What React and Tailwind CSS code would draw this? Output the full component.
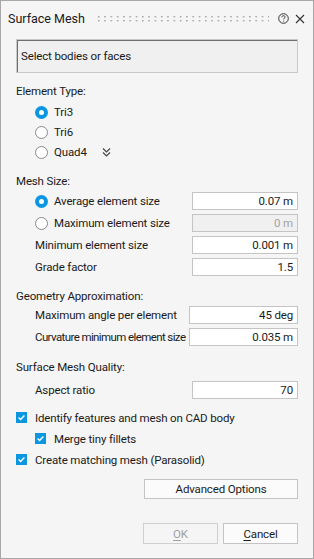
import React from 'react';

const font = { fontFamily: 'Roboto, "Liberation Sans", Arial, sans-serif' };

// small drawn glyphs
const HelpIcon = () => (
  <svg width="11" height="11" viewBox="0 0 11 11" aria-hidden="true">
    <circle cx="5.5" cy="5.5" r="4.8" fill="none" stroke="#333" strokeWidth="1" />
    <path d="M3.9 4.3c0-1 .7-1.6 1.6-1.6s1.6.6 1.6 1.4c0 .9-1.1 1.1-1.5 1.8v.5" fill="none" stroke="#333" strokeWidth="1" />
    <circle cx="5.6" cy="8" r=".6" fill="#333" />
  </svg>
);

const CloseIcon = () => (
  <svg width="10" height="10" viewBox="0 0 10 10" aria-hidden="true">
    <path d="M1 1l8 8M9 1l-8 8" stroke="#333" strokeWidth="1.1" />
  </svg>
);

const Grip = () => (
  <svg width="172" height="8" aria-hidden="true">
    <defs>
      <pattern id="dots" width="6.3" height="4" patternUnits="userSpaceOnUse">
        <rect x="1" y="1" width="1.4" height="1.4" fill="#9a9a9a" />
      </pattern>
    </defs>
    <rect width="172" height="8" fill="url(#dots)" />
  </svg>
);

const DoubleChevron = () => (
  <svg width="9" height="11" viewBox="0 0 9 11" aria-hidden="true">
    <path d="M1 1.5l3.5 3.5 3.5-3.5M1 5.5l3.5 3.5 3.5-3.5" fill="none" stroke="#444" strokeWidth="1.1" />
  </svg>
);

const Radio = ({ checked }) =>
  checked ? (
    <span className="flex h-[13px] w-[13px] shrink-0 items-center justify-center rounded-full bg-[#0a97e0]">
      <span className="h-[5px] w-[5px] rounded-full bg-white" />
    </span>
  ) : (
    <span className="h-[13px] w-[13px] shrink-0 rounded-full border border-[#8a8a8a] bg-white" />
  );

const Checkbox = () => (
  <span className="flex h-[11px] w-[11px] shrink-0 items-center justify-center bg-[#0a97e0]">
    <svg width="9" height="9" viewBox="0 0 9 9" aria-hidden="true">
      <path d="M1.6 4.6l2 2 3.8-4" fill="none" stroke="white" strokeWidth="1.4" />
    </svg>
  </span>
);

const Field = ({ value, disabled, width = 'w-[106px]' }) => (
  <div
    className={`flex h-[18px] ${width} shrink-0 items-center justify-end border border-[#c4c4c4] pr-[4px] ${
      disabled ? 'bg-[#f0f0f0] text-[#a3a3a3]' : 'bg-white text-[#1a1a1a]'
    }`}
  >
    {value}
  </div>
);

const FieldRow = ({ label, value, disabled, radio, width, tight }) => (
  <div className="flex h-[22px] items-center justify-between">
    <div className="flex min-w-0 items-center whitespace-nowrap pl-[19px]">
      {radio !== undefined && (
        <span className="mr-[6px] flex">
          <Radio checked={radio} />
        </span>
      )}
      <span className={tight ? 'tracking-[-0.6px]' : ''}>{label}</span>
    </div>
    <Field value={value} disabled={disabled} width={width} />
  </div>
);

const CheckRow = ({ label, indent = '' }) => (
  <div className={`flex h-[21px] items-center whitespace-nowrap ${indent}`}>
    <Checkbox />
    <span className="ml-[8px]">{label}</span>
  </div>
);

export default function App() {
  return (
    <div
      style={font}
      className="flex h-[559px] w-[314px] flex-col border border-[#a8a8a8] bg-[#f5f5f5] px-[15px] text-[11.5px] leading-[16px] tracking-[-0.15px] text-[#1a1a1a]"
    >
      {/* title bar */}
      <div className="-mx-[8px] flex h-[35px] items-center whitespace-nowrap">
        <span className="w-[89px] shrink-0 text-[12.5px] tracking-normal">Surface Mesh</span>
        <span className="flex">
          <Grip />
        </span>
        <span className="ml-[9px] flex">
          <HelpIcon />
        </span>
        <span className="ml-[6px] flex">
          <CloseIcon />
        </span>
      </div>

      {/* selection box */}
      <div className="mt-[3px] flex h-[34px] items-center border border-[#c9c9c9] bg-[#f0f0f0] pl-[4px] shadow-[inset_1px_1px_0_#6e6e6e]">
        Select bodies or faces
      </div>

      <div className="mt-[10px] h-[16px]">Element Type:</div>
      <div className="mt-[3px] flex flex-col pl-[19px]">
        <div className="flex h-[20px] items-center gap-[6px]">
          <Radio checked />
          <span>Tri3</span>
        </div>
        <div className="flex h-[20px] items-center gap-[6px]">
          <Radio />
          <span>Tri6</span>
        </div>
        <div className="flex h-[20px] items-center gap-[6px]">
          <Radio />
          <span>Quad4</span>
          <span className="ml-[9px] flex">
            <DoubleChevron />
          </span>
        </div>
      </div>

      <div className="mt-[11px] h-[16px]">Mesh Size:</div>
      <div className="mt-[1px] flex flex-col">
        <FieldRow label="Average element size" value="0.07 m" radio={true} />
        <FieldRow label="Maximum element size" value="0 m" radio={false} disabled />
        <FieldRow label="Minimum element size" value="0.001 m" />
        <FieldRow label="Grade factor" value="1.5" />
      </div>

      <div className="mt-[10px] h-[16px]">Geometry Approximation:</div>
      <div className="flex flex-col">
        <FieldRow label="Maximum angle per element" value="45 deg" width="w-[109px]" />
        <FieldRow label="Curvature minimum element size" value="0.035 m" width="w-[109px]" tight />
      </div>

      <div className="mt-[11px] h-[16px]">Surface Mesh Quality:</div>
      <div className="mt-[4px] flex flex-col">
        <FieldRow label="Aspect ratio" value="70" />
      </div>

      <div className="mt-[6px] flex flex-col">
        <CheckRow label="Identify features and mesh on CAD body" />
        <CheckRow label="Merge tiny fillets" indent="pl-[19px]" />
        <CheckRow label="Create matching mesh (Parasolid)" />
      </div>

      <div className="mt-[9px] flex justify-end">
        <button className="h-[20px] w-[154px] border border-[#c4c4c4] bg-[#fbfbfb] text-[#1a1a1a]">
          Advanced Options
        </button>
      </div>

      <div className="mt-[24px] flex justify-end gap-[5px]">
        <button disabled className="h-[21px] w-[75px] border border-[#cfcfcf] bg-[#f5f5f5] text-[#a0a0a0]">
          <span className="underline underline-offset-2">O</span>K
        </button>
        <button className="h-[21px] w-[75px] border border-[#c4c4c4] bg-[#fbfbfb] text-[#1a1a1a]">
          <span className="underline underline-offset-2">C</span>ancel
        </button>
      </div>
    </div>
  );
}
